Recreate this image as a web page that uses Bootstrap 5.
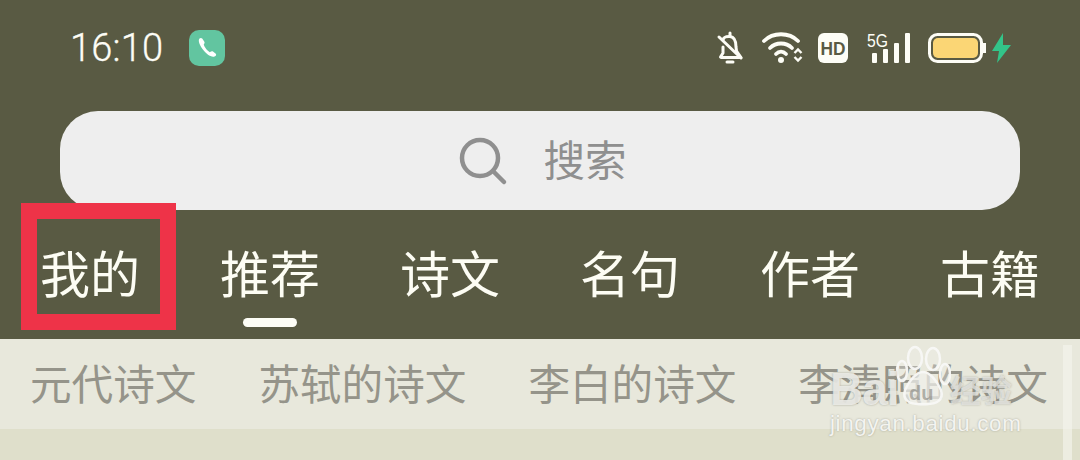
<!DOCTYPE html>
<html lang="zh">
<head>
<meta charset="utf-8">
<link href="https://cdn.jsdelivr.net/npm/bootstrap@5.3.0/dist/css/bootstrap.min.css" rel="stylesheet">
<style>
html,body{height:460px;overflow:hidden;}
body{background:#dfdfcb;font-family:"Liberation Sans","Noto Sans CJK SC",sans-serif;position:relative;}
.hdr{background:#595a43;height:339px;}
.stat{height:111px;padding:20px 50px 0 70px;color:#fdfdf6;}
.clock{font-family:Roboto,sans-serif;font-size:38px;line-height:38px;font-weight:300;letter-spacing:.2px;width:119px;margin-top:9px;-webkit-text-stroke:.3px #fdfdf6;}
.callic{width:36px;height:36px;background:#62c5a0;border-radius:10px;margin-top:10px;}
.srch{height:99px;margin:0 60px;background:#eeeeee;border-radius:38px;color:#8f8f8f;font-size:41.5px;line-height:50px;gap:34px;padding-left:6px;}
.srch span{padding-top:3px;}
.tabs{padding:0 40px;height:129px;color:#fdfdf4;font-size:50px;line-height:60px;padding-top:36px;}
.tabi{position:relative;white-space:nowrap;}
.tabi.on::after{content:"";position:absolute;left:23px;width:54px;height:9px;top:72px;background:#fdfdf6;border-radius:5px;}
.subbar{background:#e8e8dc;height:90px;padding-left:30px;padding-top:5px;gap:62px;color:#95948a;font-size:41.6px;white-space:nowrap;overflow:hidden;}
.redbox{position:absolute;left:21px;top:203px;width:155px;height:127px;border:16px solid #ee3348;}
.scrollb{position:absolute;left:1063px;top:345px;width:9px;height:115px;background:rgba(245,245,236,.65);}
.wm{position:absolute;left:830px;top:345px;width:190px;height:95px;color:rgba(248,248,245,.95);}
.wm-bai{position:absolute;left:0;top:21px;font-weight:700;font-size:46px;line-height:46px;letter-spacing:-1px;color:rgba(242,242,238,.85);text-shadow:0 0 2px rgba(110,110,100,.6);}
.wm-du{position:absolute;left:79px;top:37px;font-size:20px;line-height:22px;font-weight:700;color:rgba(120,120,112,.55);}
.wm-jy{position:absolute;left:120px;top:31px;font-size:31px;line-height:32px;font-weight:700;color:rgba(232,232,228,.75);text-shadow:0 0 2px rgba(110,110,100,.45);white-space:nowrap;}
.wm-url{position:absolute;left:0;top:66px;font-size:22.5px;line-height:26px;letter-spacing:.6px;white-space:nowrap;text-shadow:0 0 2px rgba(110,110,100,.55);}
.paw{position:absolute;left:65px;top:0;}
</style>
</head>
<body>
<div class="hdr">
  <div class="stat d-flex justify-content-between align-items-start">
    <div class="d-flex align-items-start">
      <div class="clock">16:10</div>
      <div class="callic d-flex align-items-center justify-content-center">
        <svg width="26" height="26" viewBox="0 0 26 26"><path d="M5.500 3.500 C4 5 5 9 8.500 14 C12 19 17 22.500 20.500 21.500 C22.200 21 22.500 19.500 21.800 18.800 L19 16.600 C18 16 17 16.500 15.800 17.200 C13.500 16 10.500 12.500 9.700 9.600 C10.500 8.500 11 7.500 10.200 6.500 L8.200 3.500 C7.500 2.800 6.300 2.800 5.500 3.500Z" fill="#fff"/></svg>
      </div>
    </div>
    <svg width="330" height="60" viewBox="0 0 330 60" fill="none">
      <!-- bell muted -->
      <g stroke="#fdfdf6" stroke-width="3" stroke-linejoin="round" stroke-linecap="round">
        <path d="M23 20 C24 16 27 16.500 30 16.500 C35 17 36 21 36 27 L36.500 31 L41 37.500 L21 37.500 L20.500 37 L23 33 L23 27"/>
        <path d="M30 13 L30 16"/>
        <path d="M19 17 L41 38"/>
        <path d="M27 42 L33 42"/>
      </g>
      <!-- wifi -->
      <g stroke="#fdfdf6" stroke-width="3.800" stroke-linecap="round">
        <path d="M64 21 C73 12 89 12 98 21"/>
        <path d="M70 28 C76 22 86 22 92 28"/>
        <path d="M76 34 C79 31 83 31 86 34"/>
      </g>
      <circle cx="81" cy="40" r="3" fill="#fdfdf6"/>
      <path d="M94.500 33 L98 29.500 L101.500 33 M94.500 37 L98 40.500 L101.500 37" stroke="#fdfdf6" stroke-width="2.400"/>
      <!-- HD -->
      <rect x="118" y="13" width="30" height="30" rx="6" fill="#fdfdf6"/>
      <text x="133" y="35" text-anchor="middle" font-family="Liberation Sans" font-weight="700" font-size="19" fill="#595a43" textLength="25" lengthAdjust="spacingAndGlyphs">HD</text>
      <!-- 5G -->
      <text x="167" y="27" font-family="Liberation Sans" font-size="18" fill="#fdfdf6" textLength="21" lengthAdjust="spacingAndGlyphs">5G</text>
      <rect x="172" y="33" width="5" height="10" rx="1" fill="#fdfdf6"/>
      <rect x="183" y="29" width="5" height="14" rx="1" fill="#fdfdf6"/>
      <rect x="194" y="23" width="5" height="20" rx="1" fill="#fdfdf6"/>
      <rect x="205" y="13" width="5" height="30" rx="1" fill="#fdfdf6"/>
      <!-- battery -->
      <rect x="229.500" y="14.500" width="52" height="27" rx="8" stroke="#fdfdf6" stroke-width="3"/>
      <rect x="233" y="18" width="45" height="20" rx="5" fill="#fbd675"/>
      <rect x="283" y="23" width="3" height="10" fill="#fdfdf6"/>
      <path d="M303 13 L292 31 L299 31 L297 43 L311 25 L303 25 Z" fill="#33c489"/>
    </svg>
  </div>
  <div class="srch d-flex align-items-center justify-content-center">
    <svg width="50" height="50" viewBox="0 0 50 50" fill="none" stroke="#8f8f8f" stroke-width="4.500" stroke-linecap="round"><circle cx="21" cy="22" r="18"/><path d="M34 35 L45 46"/></svg>
    <span>搜索</span>
  </div>
  <div class="tabs d-flex justify-content-between align-items-start">
    <div class="tabi">我的</div>
    <div class="tabi on">推荐</div>
    <div class="tabi">诗文</div>
    <div class="tabi">名句</div>
    <div class="tabi">作者</div>
    <div class="tabi">古籍</div>
  </div>
</div>
<div class="subbar d-flex align-items-center">
  <span>元代诗文</span><span>苏轼的诗文</span><span>李白的诗文</span><span>李清照的诗文</span>
</div>
<div class="redbox"></div>
<div class="scrollb"></div>
<div class="wm">
  <svg class="paw" width="56" height="62" viewBox="0 0 56 62" fill="rgba(240,240,236,.3)" stroke="rgba(248,248,245,.95)" stroke-width="2.500">
    <ellipse cx="20" cy="13" rx="7" ry="11"/><ellipse cx="38" cy="14" rx="7" ry="11"/>
    <ellipse cx="7" cy="26" rx="5" ry="10"/><ellipse cx="50" cy="29" rx="5" ry="10"/>
    <path d="M28 27 C21 27 14 36 10 45 C7 55 14 60 28 59 C42 60 49 55 46 45 C42 36 35 27 28 27Z" fill="rgba(240,240,236,.72)"/>
  </svg>
  <span class="wm-bai">Bai</span>
  <span class="wm-du">du</span>
  <span class="wm-jy">经验</span>
  <span class="wm-url">jingyan.baidu.com</span>
</div>
</body>
</html>
